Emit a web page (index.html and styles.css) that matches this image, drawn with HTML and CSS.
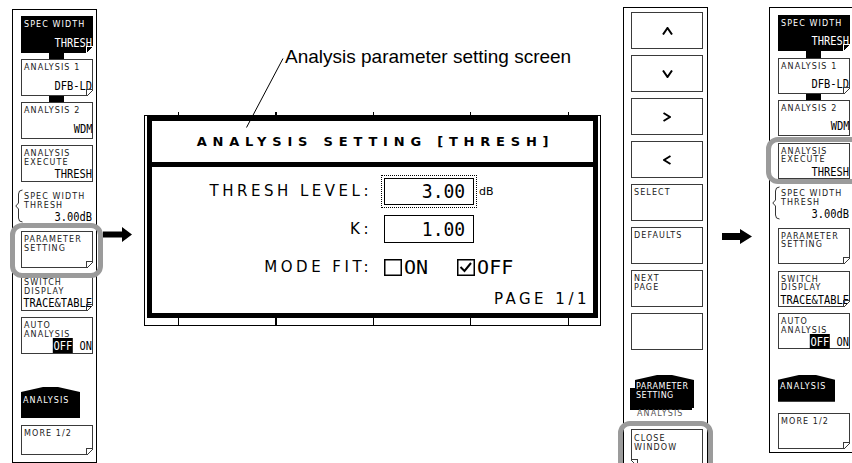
FILE: index.html
```html
<!doctype html>
<html lang="en">
  <head>
    <meta charset="utf-8">
    <title>Analysis parameter setting screen</title>
    <link rel="stylesheet" href="styles.css">
  </head>
  <body>

    <!-- soft key menu before the change -->
    <div class="panel panel-left">
      <div class="key key-on linked"><span class="lbl">SPEC WIDTH</span><span class="val">THRESH</span><i class="ear"></i></div>
      <div class="link"></div>
      <div class="key linked"><span class="lbl">ANALYSIS 1</span><span class="val">DFB-LD</span><i class="ear"></i></div>
      <div class="link"></div>
      <div class="key"><span class="lbl">ANALYSIS 2</span><span class="val">WDM</span></div>
      <div class="key"><span class="lbl">ANALYSIS<br>EXECUTE</span><span class="val">THRESH</span></div>
      <div class="key key-disp">
        <svg class="bracket" width="8" height="34" viewBox="0 0 8 34"><path d="M7.5 1 Q3.5 1 3.5 5 L3.5 14 L0.8 17 L3.5 20 L3.5 29 Q3.5 33 7.5 33" fill="none" stroke="#333" stroke-width="1"/></svg>
        <span class="lbl">SPEC WIDTH<br>THRESH</span><span class="val">3.00dB</span>
      </div>
      <div class="key"><span class="lbl">PARAMETER<br>SETTING</span><i class="ear"></i></div>
      <div class="key"><span class="lbl">SWITCH<br>DISPLAY</span><span class="val">TRACE&amp;TABLE</span><i class="ear"></i></div>
      <div class="key"><span class="lbl">AUTO<br>ANALYSIS</span><span class="val"><em>OFF</em> ON</span></div>
      <div class="tab">ANALYSIS</div>
      <div class="key key-more"><span class="lbl">MORE 1/2</span><i class="ear"></i></div>
      <div class="ring ring-left"></div>
    </div>

    <svg class="arrow arrow-left" width="29" height="15" viewBox="0 0 29 15"><polygon points="0,4.5 19,4.5 19,0 29,7.5 19,15 19,10.5 0,10.5" fill="#000"/></svg>

    <!-- the dialog window -->
    <div class="figure">
      <div class="caption">Analysis parameter setting screen</div>
      <div class="screen">
        <div class="dialog">
          <div class="dialog-title">ANALYSIS SETTING [THRESH]</div>
          <div class="dialog-body">
            <div class="row">
              <span class="row-label">THRESH LEVEL:</span>
              <span class="field field-focus"><span class="num">3.00</span></span>
              <span class="unit">dB</span>
            </div>
            <div class="row">
              <span class="row-label">K:</span>
              <span class="field"><span class="num">1.00</span></span>
            </div>
            <div class="row">
              <span class="row-label">MODE FIT:</span>
              <svg class="check" width="18" height="17" viewBox="0 0 18 17"><rect x="0.75" y="0.75" width="16.5" height="15.5" fill="none" stroke="#000" stroke-width="1.5"/></svg>
              <span class="opt">ON</span>
              <svg class="check check-2" width="18" height="17" viewBox="0 0 18 17"><rect x="0.75" y="0.75" width="16.5" height="15.5" fill="none" stroke="#000" stroke-width="1.5"/><polyline points="3.5,8 7.5,12 14,4" fill="none" stroke="#000" stroke-width="2"/></svg>
              <span class="opt">OFF</span>
            </div>
            <div class="page">PAGE 1/1</div>
          </div>
        </div>
      </div>
      <svg class="leader" width="38" height="70" viewBox="0 0 38 70"><line x1="37" y1="0.5" x2="0.5" y2="69.5" stroke="#000" stroke-width="1"/></svg>
    </div>

    <!-- soft keys while the dialog is open -->
    <div class="panel panel-mid">
      <div class="key key-arrow"><svg width="11" height="8" viewBox="0 0 11 8"><polyline points="1,7.5 5.5,1 10,7.5" fill="none" stroke="#000" stroke-width="2"/></svg></div>
      <div class="key key-arrow"><svg width="11" height="8" viewBox="0 0 11 8"><polyline points="1,0.5 5.5,7 10,0.5" fill="none" stroke="#000" stroke-width="2"/></svg></div>
      <div class="key key-arrow"><svg width="8" height="10" viewBox="0 0 8 10"><polyline points="0.5,1 7,5 0.5,9" fill="none" stroke="#000" stroke-width="2"/></svg></div>
      <div class="key key-arrow"><svg width="8" height="10" viewBox="0 0 8 10"><polyline points="7.5,1 1,5 7.5,9" fill="none" stroke="#000" stroke-width="2"/></svg></div>
      <div class="key"><span class="lbl">SELECT</span></div>
      <div class="key"><span class="lbl">DEFAULTS</span></div>
      <div class="key"><span class="lbl">NEXT<br>PAGE</span></div>
      <div class="key"></div>
      <div class="tab-stack">
        <div class="tab-shadow"></div>
        <div class="tab">PARAMETER<br>SETTING</div>
        <span class="ghost">ANALYSIS</span>
      </div>
      <div class="key key-close"><span class="lbl">CLOSE<br>WINDOW</span><i class="ear ear-left"></i></div>
      <div class="ring ring-mid"></div>
    </div>

    <svg class="arrow arrow-right" width="30" height="15" viewBox="0 0 30 15"><polygon points="0,4 18,4 18,0 30,7.5 18,15 18,11 0,11" fill="#000"/></svg>

    <!-- soft key menu after closing -->
    <div class="panel panel-right">
      <div class="key key-on linked"><span class="lbl">SPEC WIDTH</span><span class="val">THRESH</span><i class="ear"></i></div>
      <div class="link"></div>
      <div class="key linked"><span class="lbl">ANALYSIS 1</span><span class="val">DFB-LD</span><i class="ear"></i></div>
      <div class="link"></div>
      <div class="key"><span class="lbl">ANALYSIS 2</span><span class="val">WDM</span></div>
      <div class="key"><span class="lbl">ANALYSIS<br>EXECUTE</span><span class="val">THRESH</span></div>
      <div class="key key-disp">
        <svg class="bracket" width="8" height="34" viewBox="0 0 8 34"><path d="M7.5 1 Q3.5 1 3.5 5 L3.5 14 L0.8 17 L3.5 20 L3.5 29 Q3.5 33 7.5 33" fill="none" stroke="#333" stroke-width="1"/></svg>
        <span class="lbl">SPEC WIDTH<br>THRESH</span><span class="val">3.00dB</span>
      </div>
      <div class="key"><span class="lbl">PARAMETER<br>SETTING</span><i class="ear"></i></div>
      <div class="key"><span class="lbl">SWITCH<br>DISPLAY</span><span class="val">TRACE&amp;TABLE</span><i class="ear"></i></div>
      <div class="key"><span class="lbl">AUTO<br>ANALYSIS</span><span class="val"><em>OFF</em> ON</span></div>
      <div class="tab">ANALYSIS</div>
      <div class="key key-more"><span class="lbl">MORE 1/2</span><i class="ear"></i></div>
      <div class="ring ring-right"></div>
    </div>

  </body>
</html>
```

FILE: styles.css
```css
html, body {
  margin: 0;
  padding: 0;
}

body {
  display: flex;
  align-items: flex-start;
  height: 463px;
  overflow: hidden;
  background: #fff;
  color: #000;
  font-family: "DejaVu Sans", sans-serif;
}

/* soft key panels */

.panel {
  position: relative;
  flex-shrink: 0;
  display: flex;
  flex-direction: column;
  box-sizing: border-box;
  width: 85px;
  height: 470px;
  border: 1px solid #000;
  padding: 6px 3px 0 8px;
}

.panel-left {
  height: 454px;
  margin: 9px 0 0 12px;
}

.panel-mid {
  margin: 7px 0 0 22px;
  padding: 4px 3px 0 7px;
}

.panel-right {
  width: 90px;
  height: 446px;
  margin: 7px 0 0 17px;
  padding-top: 7px;
}

.key {
  position: relative;
  flex-shrink: 0;
  display: flex;
  flex-direction: column;
  justify-content: space-between;
  box-sizing: border-box;
  width: 72px;
  height: 37px;
  margin-bottom: 6px;
  padding: 4px 0 3px 2px;
  border: 1px solid #3a3a3a;
  background: #fff;
}

.panel-right .key {
  height: 36px;
  margin-bottom: 6.6px;
}

.key.linked {
  margin-bottom: 0;
}

.link {
  flex-shrink: 0;
  width: 15px;
  height: 6px;
  margin-left: 28px;
  background: #000;
}

.panel-right .link {
  height: 6.6px;
}

.key-on {
  background: #000;
  border-color: #000;
  color: #fff;
}

.key-disp {
  border-color: transparent;
  background: transparent;
  padding-bottom: 6px;
}

.bracket {
  position: absolute;
  left: -7px;
  top: 0;
}

.key-arrow {
  align-items: center;
  justify-content: center;
  padding: 0;
}

.lbl {
  font-size: 8px;
  line-height: 8.5px;
  letter-spacing: 1.1px;
  white-space: nowrap;
  color: #1a1a1a;
}

.key-on .lbl {
  color: #fff;
}

.val {
  align-self: flex-end;
  white-space: nowrap;
  font: 13px/13px "DejaVu Sans Mono", monospace;
  transform: scaleX(0.8);
  transform-origin: right center;
}

.val em {
  font-style: normal;
  background: #000;
  color: #fff;
  padding: 0 1px;
}

/* folded corner */
.ear {
  position: absolute;
  right: -1px;
  bottom: -1px;
  width: 6px;
  height: 6px;
  border-top: 1px solid #3a3a3a;
  border-left: 1px solid #3a3a3a;
  background: linear-gradient(to bottom right, transparent 44%, #3a3a3a 44% 58%, #fff 58%);
}

.key-on .ear {
  border-color: #fff;
  background: linear-gradient(to bottom right, transparent 44%, #fff 44%);
}

.ear-left {
  left: -1px;
  right: auto;
  border-left: 0;
  border-right: 1px solid #3a3a3a;
  background: linear-gradient(to bottom left, transparent 44%, #3a3a3a 44% 58%, #fff 58%);
}

.tab {
  flex-shrink: 0;
  box-sizing: border-box;
  width: 59px;
  height: 31px;
  margin: 27px 0 7px;
  padding: 10px 0 0 2px;
  background: #000;
  color: #fff;
  font-size: 8px;
  line-height: 8.5px;
  letter-spacing: 1.1px;
  clip-path: polygon(0 5px, 22px 0, 37px 0, 100% 5px, 100% 100%, 0 100%);
}

.key-more {
  height: 30px;
}

.panel-right .tab {
  width: 57px;
  height: 27px;
  margin: 19px 0 11px;
  padding-top: 8px;
}

.panel-right .key-more {
  height: 36px;
}

.tab-stack {
  position: relative;
  flex-shrink: 0;
  height: 33px;
  margin: 19px 0 21px;
}

.tab-stack .tab {
  position: relative;
  width: 59px;
  height: 33px;
  margin: 0 0 0 4px;
  padding: 8px 0 0 1px;
  letter-spacing: 0.5px;
}

.tab-shadow {
  position: absolute;
  left: -1px;
  top: 13px;
  width: 62px;
  height: 22px;
  background: #000;
}

.ghost {
  position: absolute;
  left: 6px;
  top: 35px;
  font-size: 8px;
  line-height: 8px;
  letter-spacing: 1.1px;
  color: #555;
}

.key-close {
  padding-top: 5px;
}

.ring {
  position: absolute;
  box-sizing: border-box;
  border: 5px solid #9b9b9b;
  border-radius: 12px;
}

.ring-left {
  left: -3px;
  top: 213px;
  width: 93px;
  height: 55px;
}

.ring-mid {
  left: -6px;
  top: 413px;
  width: 95px;
  height: 62px;
}

.ring-right {
  left: -4px;
  top: 129px;
  width: 100px;
  height: 47px;
}

/* big arrows */

.arrow {
  flex-shrink: 0;
}

.arrow-left {
  margin: 227px 0 0 6px;
}

.arrow-right {
  margin: 229px 0 0 14px;
}

/* dialog figure */

.figure {
  position: relative;
  flex-shrink: 0;
  width: 457px;
  margin: 46px 0 0 12px;
}

.caption {
  margin-left: 141px;
  font: 19px/22px "Liberation Sans", Arial, sans-serif;
  white-space: nowrap;
}

.leader {
  position: absolute;
  left: 102px;
  top: 12px;
}

.screen {
  position: relative;
  box-sizing: border-box;
  height: 211px;
  margin-top: 47px;
  border: 1px solid #000;
  padding: 0 2px 7px;
}

.screen::before,
.screen::after {
  content: "";
  position: absolute;
  left: 33px;
  right: 0;
  background: repeating-linear-gradient(to right, #000 0 1px, transparent 1px 97.5px);
}

.screen::before {
  top: -4px;
  height: 3px;
}

.screen::after {
  bottom: 0;
  height: 7px;
}

.dialog {
  box-sizing: border-box;
  height: 100%;
  border: 5px solid #000;
  background: #fff;
}

.dialog-title {
  display: flex;
  align-items: center;
  justify-content: center;
  box-sizing: border-box;
  height: 46px;
  padding-left: 6px;
  border-bottom: 5px solid #000;
  font-size: 13px;
  font-weight: bold;
  letter-spacing: 5.8px;
  white-space: nowrap;
}

.dialog-body {
  padding-top: 10px;
}

.row {
  display: flex;
  align-items: center;
  height: 28px;
  margin-bottom: 10px;
}

.row-label {
  width: 220px;
  text-align: right;
  font-size: 15px;
  letter-spacing: 3.5px;
  white-space: nowrap;
}

.field {
  display: flex;
  align-items: center;
  justify-content: flex-end;
  box-sizing: border-box;
  width: 90px;
  height: 28px;
  margin-left: 12px;
  padding-right: 8px;
  border: 1px solid #000;
}

.field-focus {
  height: 27px;
  outline: 1px dotted #000;
  outline-offset: 2px;
}

.num {
  font: 20px/20px "DejaVu Sans Mono", monospace;
  transform: scaleX(0.9);
  transform-origin: right center;
}

.unit {
  margin-left: 5px;
  font-size: 11px;
}

.check {
  margin-left: 12px;
}

.check-2 {
  margin-left: 29px;
}

.opt {
  margin-left: 2px;
  font: 20px/20px "DejaVu Sans Mono", monospace;
}

.page {
  margin: 6px 3px 0 0;
  text-align: right;
  font-size: 15px;
  line-height: 16px;
  letter-spacing: 3.5px;
}
```
